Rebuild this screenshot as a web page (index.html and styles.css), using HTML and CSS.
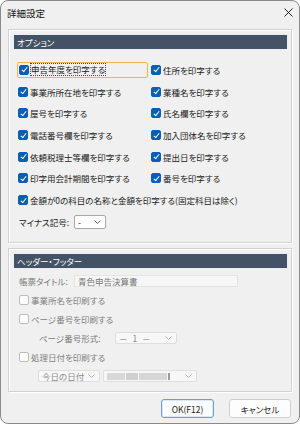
FILE: index.html
```html
<!DOCTYPE html>
<html lang="ja">
<head>
    <meta charset="UTF-8">
    <meta name="viewport" content="width=device-width, initial-scale=1.0">
    <title>詳細設定</title>
    <link rel="stylesheet" href="styles.css">
</head>
<body>

    <div class="window">
        <div class="titlebar">
            <span class="title">詳細設定</span>
            <svg class="close" width="9" height="9" viewBox="0 0 9 9">
                <path d="M0.5 0.5 L8.5 8.5 M8.5 0.5 L0.5 8.5" stroke="#222" stroke-width="1"/>
            </svg>
        </div>

        <div class="content">
            <div class="group group-options">
                <div class="group-head">オプション</div>

                <div class="opt-grid">
                    <label class="check focused"><span class="cb on"></span><span class="txt">申告年度を印字する</span></label>
                    <label class="check"><span class="cb on"></span>住所を印字する</label>
                    <label class="check"><span class="cb on"></span>事業所所在地を印字する</label>
                    <label class="check"><span class="cb on"></span>業種名を印字する</label>
                    <label class="check"><span class="cb on"></span>屋号を印字する</label>
                    <label class="check"><span class="cb on"></span>氏名欄を印字する</label>
                    <label class="check"><span class="cb on"></span>電話番号欄を印字する</label>
                    <label class="check"><span class="cb on"></span>加入団体名を印字する</label>
                    <label class="check"><span class="cb on"></span>依頼税理士等欄を印字する</label>
                    <label class="check"><span class="cb on"></span>提出日を印字する</label>
                    <label class="check"><span class="cb on"></span>印字用会計期間を印字する</label>
                    <label class="check"><span class="cb on"></span>番号を印字する</label>
                    <label class="check wide"><span class="cb on"></span>金額が0の科目の名称と金額を印字する(固定科目は除く)</label>
                    <div class="field-row wide">
                        <span class="minus-label">マイナス記号:</span>
                        <span class="select minus-select">
                            <span class="val">-</span>
                            <svg width="7" height="4" viewBox="0 0 7 4"><path d="M0.5 0.5 L3.5 3.5 L6.5 0.5" fill="none" stroke="#555" stroke-width="0.9"/></svg>
                        </span>
                    </div>
                </div>
            </div>

            <div class="group group-header">
                <div class="group-head">ヘッダー・フッター</div>

                <div class="hf-rows">
                    <div class="field-row">
                        <span class="dis-label title-label">帳票タイトル:</span>
                        <span class="textbox">青色申告決算書</span>
                    </div>
                    <label class="check disabled"><span class="cb"></span>事業所名を印刷する</label>
                    <label class="check disabled"><span class="cb"></span>ページ番号を印刷する</label>
                    <div class="field-row indent">
                        <span class="dis-label page-label">ページ番号形式:</span>
                        <span class="select dis page-select">
                            <span class="val spaced">－ 1 －</span>
                            <svg width="7" height="4" viewBox="0 0 7 4"><path d="M0.5 0.5 L3.5 3.5 L6.5 0.5" fill="none" stroke="#aaa" stroke-width="0.9"/></svg>
                        </span>
                    </div>
                    <label class="check disabled"><span class="cb"></span>処理日付を印刷する</label>
                    <div class="field-row indent-date">
                        <span class="select dis date-kind">
                            <span class="val">今日の日付</span>
                            <svg width="7" height="4" viewBox="0 0 7 4"><path d="M0.5 0.5 L3.5 3.5 L6.5 0.5" fill="none" stroke="#aaa" stroke-width="0.9"/></svg>
                        </span>
                        <span class="select dis date-value">
                            <span class="blur">
                                <i class="b1"></i><i class="b2"></i><i class="b3"></i><i class="b4"></i>
                            </span>
                            <svg width="7" height="4" viewBox="0 0 7 4"><path d="M0.5 0.5 L3.5 3.5 L6.5 0.5" fill="none" stroke="#aaa" stroke-width="0.9"/></svg>
                        </span>
                    </div>
                </div>
            </div>

            <div class="buttons">
                <button class="btn default">OK(F12)</button>
                <button class="btn cancel">キャンセル</button>
            </div>
        </div>
    </div>

</body>
</html>
```

FILE: styles.css
```css
body {
    margin: 0;
    padding: 0;
    background-color: #ffffff;
    font-family: "Noto Sans CJK JP", "Noto Sans", sans-serif;
    font-size: 8.5px;
    font-feature-settings: "palt";
    color: #1a1a1a;
}

.window {
    box-sizing: border-box;
    width: 300px;
    height: 424px;
    border: 1px solid #8a8a8a;
    border-radius: 8px;
    background-color: #f0f0f0;
    overflow: hidden;
}

.titlebar {
    height: 23px;
    display: flex;
    align-items: center;
    justify-content: space-between;
    padding: 0 7px 0 6px;
}

.title {
    font-size: 9.5px;
    color: #111;
}

.close {
    margin-right: -1px;
}

.content {
    padding: 0 7px;
}

.group {
    box-sizing: border-box;
    border: 1px solid #d2d2d2;
    box-shadow: inset 1px 1px 0 #ffffff, 1px 1px 0 #ffffff;
    padding: 5px 4px 0 5px;
}

.group-options {
    margin-top: 5px;
    height: 214px;
}

.group-header {
    margin-top: 5px;
    height: 144px;
}

.group-head {
    height: 14px;
    line-height: 14px;
    padding-left: 3px;
    background-color: #435264;
    color: #ffffff;
    outline: 1px solid #e6edf4;
}

.opt-grid {
    display: grid;
    grid-template-columns: 133px 1fr;
    grid-auto-rows: 21.7px;
    margin-top: 10px;
    padding-left: 4px;
}

.wide {
    grid-column: 1 / 3;
}

.check {
    display: flex;
    align-items: center;
    gap: 2px;
    white-space: nowrap;
    cursor: pointer;
}

.cb {
    box-sizing: border-box;
    position: relative;
    flex: none;
    width: 10px;
    height: 10px;
    border: 1px solid #8a8a8a;
    border-radius: 2px;
    background-color: #ffffff;
}

.cb.on {
    border-color: #0a5fb4;
    background-color: #0a5fb4;
}

.cb.on::after {
    content: '';
    position: absolute;
    left: 2.6px;
    top: 0.6px;
    width: 2.4px;
    height: 5px;
    border-right: 1.1px solid #ffffff;
    border-bottom: 1.1px solid #ffffff;
    transform: rotate(40deg);
}

.focused {
    margin: 3px 0 3px -1px;
    padding-left: 1px;
    border: 1px solid #f2b544;
    border-radius: 2px;
    width: 131px;
    box-sizing: border-box;
}

.focused .txt {
    outline: 1px dotted #444;
    outline-offset: 0;
    line-height: 11px;
}

.field-row {
    display: flex;
    align-items: center;
}

.minus-label {
    margin-left: 1px;
    width: 55px;
}

.select {
    box-sizing: border-box;
    display: flex;
    align-items: center;
    justify-content: space-between;
    height: 14px;
    padding: 0 4px 0 3px;
    border: 1px solid #a8a8a8;
    border-radius: 2px;
    background-color: #ffffff;
}

.minus-select {
    width: 32px;
}

.select.dis {
    height: 12px;
    border-color: #dedede;
    background-color: #f7f7f7;
    color: #8a8a8a;
}

.spaced {
    word-spacing: 3px;
}

.hf-rows {
    display: flex;
    flex-direction: column;
    margin-top: 3.5px;
    padding-left: 5px;
}

.hf-rows > * {
    height: 19px;
}

.dis-label {
    color: #7a7a7a;
}

.title-label {
    width: 55px;
}

.textbox {
    box-sizing: border-box;
    width: 164px;
    height: 12px;
    line-height: 11px;
    padding-left: 3px;
    background-color: #f6f6f6;
    border: 1px solid #e4e4e4;
    color: #777;
}

.check.disabled {
    color: #7f7f7f;
}

.check.disabled .cb {
    border-color: #bdbdbd;
    background-color: #fbfbfb;
}

.indent {
    padding-left: 20px;
}

.page-label {
    width: 76px;
}

.page-select {
    width: 62px;
}

.indent-date {
    padding-left: 19px;
    gap: 3px;
}

.date-kind {
    width: 62px;
}

.date-value {
    width: 94px;
}

.blur {
    display: flex;
    align-items: center;
    gap: 1px;
}

.blur i {
    display: block;
    height: 7px;
    background-color: #d2d2d2;
}

.blur .b1 { width: 18px; background-color: #d8d8d8; }
.blur .b2 { width: 12px; background-color: #cfcfcf; }
.blur .b3 { width: 28px; background-color: #d6d6d6; }
.blur .b4 { width: 2px; background-color: #9a9a9a; }

.buttons {
    display: flex;
    justify-content: flex-end;
    gap: 15px;
    margin-top: 7px;
    margin-right: 1px;
}

.btn {
    box-sizing: border-box;
    height: 19px;
    padding: 0;
    font-family: "Noto Sans CJK JP", "Noto Sans", sans-serif;
    font-size: 8.5px;
    font-feature-settings: "palt";
    color: #1a1a1a;
    background-color: #fdfdfd;
    border: 1px solid #cfcfcf;
    border-radius: 3px;
}

.btn.default {
    width: 53px;
    border-color: #6a9fd6;
    box-shadow: inset 0 0 0 1px #d9e8f7;
}

.btn.cancel {
    width: 62px;
}
```
